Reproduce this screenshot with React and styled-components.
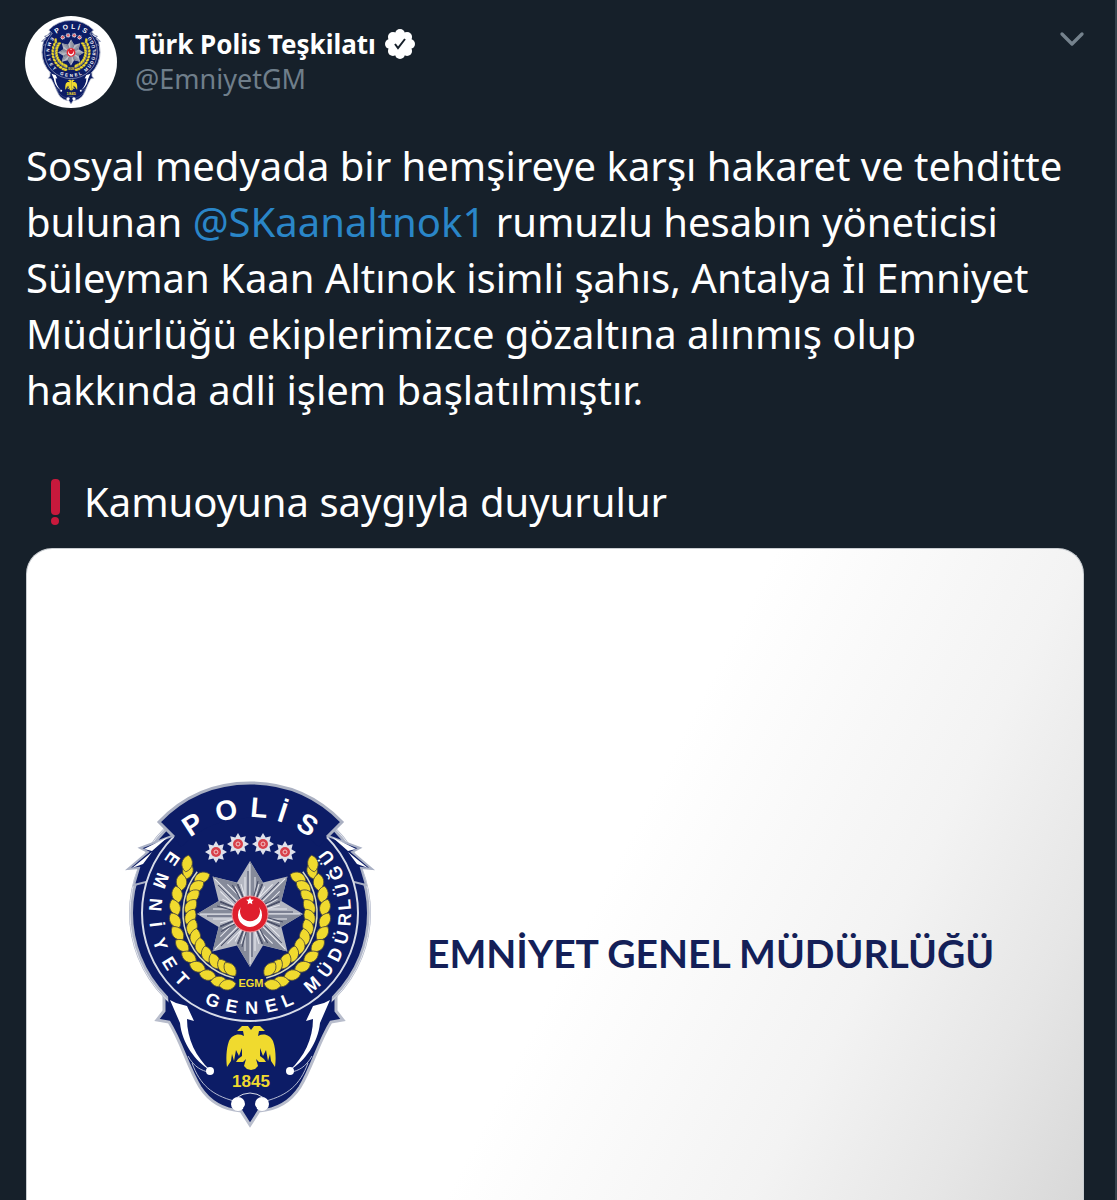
import React from 'react';
import styled, { createGlobalStyle } from 'styled-components';
import { FiChevronDown } from 'react-icons/fi';

const NAVY = '#0c1c66';
const GOLD = '#f0da2e';

// centre of the round part of the badge
const CX = 250;
const CY = 912;

const point = (radius, angle, cx = CX, cy = CY) => {
    const a = (angle * Math.PI) / 180;
    return [cx + radius * Math.sin(a), cy - radius * Math.cos(a)];
}

const starPoints = (cx, cy, outer, inner, tips) => {
    const pts = [];
    for (let i = 0; i < tips * 2; i++) {
        pts.push(point(i % 2 ? inner : outer, (i * 180) / tips, cx, cy).join(','));
    }
    return pts.join(' ');
}

// letter, angle clockwise from the top
const topLetters = [['P', -33], ['O', -13], ['L', 5], ['İ', 18], ['S', 33]];

const ringLetters = [
    ['E', 305], ['M', 290], ['N', 275], ['İ', 263], ['Y', 251], ['E', 238], ['T', 226],
    ['G', 203], ['E', 191], ['N', 179], ['E', 167], ['L', 157],
    ['M', 139], ['Ü', 127], ['D', 116], ['Ü', 105], ['R', 94], ['L', 85], ['Ü', 76], ['Ğ', 65], ['Ü', 54],
];

const leafAngles = [-56, -66, -76, -86, -96, -106, -116, -126, -136, -146, -156, -163];

const LEAF = 'M0 -9 C7 -5 7 4 0 8 C-7 4 -7 -5 0 -9Z';

const Laurel = () => (
    <g fill={GOLD} stroke="#4d4a3c" strokeWidth="0.8">
        {leafAngles.map((angle) => {
            const [ox, oy] = point(75, angle);
            const [ix, iy] = point(60, angle + 2);
            return (
                <g key={angle}>
                    <path d={LEAF} transform={`translate(${ox} ${oy}) rotate(${angle + 66})`} />
                    <path d={LEAF} transform={`translate(${ix} ${iy}) rotate(${angle + 124})`} />
                </g>
            )
        })}
        <path d={LEAF} transform="translate(187 863) rotate(10)" />
        <path d={`M${point(67, -52).join(' ')} A67 67 0 0 0 ${point(67, -166).join(' ')}`} fill="none" stroke="#d9dbc0" strokeWidth="1.5" />
    </g>
)

const Feathers = () => (
    <g>
        <path d="M172 835 L140 847 L148 851 L128 868 L139 867 L134 884 L150 880 L176 840Z" fill={NAVY} stroke="#a9b0c4" strokeWidth="2" />
        <path d="M168 836 L144 848 L152 850Z M152 851 L132 867 L143 863Z" fill="#fff" />
    </g>
)

// left half of the shield, drawn twice
const Half = () => (
    <g>
        <path d="M170 999 L176 1002 L187 1005 L194 1020 L187 1018 C187 1038 196 1056 210 1069 C195 1060 182 1042 180 1022Z" fill="#fff" />
        <path d="M188 1055 C194 1066 202 1070 209 1071 M192 1062 C200 1084 212 1094 234 1100" fill="none" stroke="#b4bbd2" strokeWidth="1" />
        <circle cx="210" cy="1070" r="4" fill="#fff" />
        <circle cx="238" cy="1103" r="7" fill="#fff" />
        <Laurel />
    </g>
)

const EagleHalf = () => (
    <path d="M0 -18 L-3 -22 L-9 -22 L-14 -17 L-8 -17 L-7 -12 C-13 -15 -19 -13 -22 -7 C-25 1 -25 12 -24 19 L-20 13 L-19 6 L-17 13 L-15 2 L-12 8 L-9 0 L-9 8 L-13 11 L-15 14 L-8 14 L-5 11 L-7 18 L-4 21 L0 22Z" />
)

const PoliceBadge = ({ className }) => (
    <svg className={className} viewBox="124 776 252 352" role="img" aria-label="Emniyet Genel Müdürlüğü">
        <path
            d="M164 994 L164 1010 L157 1019 L169 1021 C181 1040 188 1066 200 1086 C211 1103 227 1109 241 1110 L250 1124 L259 1110 C273 1109 289 1103 300 1086 C312 1066 319 1040 331 1021 L343 1019 L336 1010 L336 994Z"
            fill={NAVY}
            stroke="#b8bdcc"
            strokeWidth="3"
        />
        <circle cx={CX} cy={CY} r="119" fill={NAVY} stroke="#aeb4c6" strokeWidth="4" />
        <circle cx={CX} cy={CY} r="120" fill="none" stroke="#e4e7ef" strokeWidth="1" />
        <path d="M168 994 H332 L331 1010 L320 1036 H180 L169 1010Z" fill={NAVY} />
        <Feathers />
        <g transform="translate(500 0) scale(-1 1)"><Feathers /></g>
        <circle cx={CX} cy={CY} r="108" fill={NAVY} stroke="#d8dce8" strokeWidth="2" />
        <Half />
        <g transform="translate(500 0) scale(-1 1)"><Half /></g>
        <path d="M159 821 Q196 782 250 782 Q304 782 342 821 L327 836 L319 846 A96 96 0 0 0 181 846 L174 836Z" fill={NAVY} />
        <path d="M174 836 L159 821 Q196 782 250 782 Q304 782 342 821 L327 836" fill="none" stroke="#aab0c2" strokeWidth="3" />
        <path d="M236 1097 Q250 1087 264 1097" fill="none" stroke="#d8dce8" strokeWidth="1" />
        <path d="M250 1098 L257 1107 L250 1116 L243 1107Z" fill={NAVY} />

        <BadgeText $size={28}>
            {topLetters.map(([letter, angle]) => (
                <text key={angle} x={CX} y={CY - 96} transform={`rotate(${angle} ${CX} ${CY})`}>{letter}</text>
            ))}
        </BadgeText>
        <BadgeText $size={18}>
            {ringLetters.map(([letter, angle]) => (
                <text key={angle} x={CX} y={CY + 101} transform={`rotate(${angle - 180} ${CX} ${CY})`}>{letter}</text>
            ))}
        </BadgeText>

        {[[216, 851], [238, 843], [263, 843], [285, 851]].map(([x, y]) => (
            <g key={x}>
                <polygon points={starPoints(x, y, 11, 7, 8)} fill="#dfe1ea" />
                <circle cx={x} cy={y} r="5" fill="#d8404a" />
                <circle cx={x} cy={y} r="2" fill="none" stroke="#f3c9cc" strokeWidth="1" />
            </g>
        ))}

        <polygon points={starPoints(CX, 913, 53, 34, 8)} fill="#b3b6c1" />
        {Array.from({ length: 8 }, (_, i) => (
            <g key={i} transform={`rotate(${i * 45} ${CX} 913)`}>
                <path d="M250 860 L250 913 L263 882Z" fill="#858a9a" />
                <path d="M250 863 V895 M245 876 V896 M255 876 V896 M241 883 L246 900 M259 883 L254 900" stroke="#e9eaf0" strokeWidth="1" />
                <path d="M248 870 V895 M258 880 L253 898 M262 883 L254 903 M238 883 L246 903" stroke="#454b64" strokeWidth="1" />
            </g>
        ))}
        <circle cx={CX} cy="913" r="18" fill="#df1f2d" stroke="#e8999f" strokeWidth="1" />
        <path d="M241 906 A12 12 0 1 0 259 906 A10 10 0 1 1 241 906Z" fill="#fff" />
        <polygon points={starPoints(CX, 900, 4, 2, 5)} fill="#fff" />

        <BadgeText $size={11} $color={GOLD}><text x="251" y="986">EGM</text></BadgeText>
        <g transform="translate(251 1047)" fill={GOLD}>
            <EagleHalf />
            <g transform="scale(-1 1)"><EagleHalf /></g>
        </g>
        <BadgeText $size={17} $color={GOLD}><text x="251" y="1086">1845</text></BadgeText>
    </svg>
)

const VerifiedIcon = () => (
    <svg width="32" height="32" viewBox="0 0 32 32" role="img" aria-label="Onaylanmış hesap">
        {Array.from({ length: 8 }, (_, i) => {
            const [x, y] = point(10, i * 45, 16, 16);
            return <circle key={i} cx={x} cy={y} r="5" fill="#fff" />
        })}
        <circle cx="16" cy="16" r="11" fill="#fff" />
        <path d="M11 16 L14 20 L21 11" fill="none" stroke="#16202a" strokeWidth="2" />
    </svg>
)

const App = () => {

    return (
        <>
        <GlobalStyle />
        <Tweet>
            <Header>
                <Avatar href="#profile" aria-label="Türk Polis Teşkilatı">
                    <AvatarBadge />
                </Avatar>
                <Names>
                    <Name>Türk Polis Teşkilatı <VerifiedIcon /></Name>
                    <Handle>@EmniyetGM</Handle>
                </Names>
                <MenuButton type="button" aria-label="Diğer">
                    <FiChevronDown size={40} strokeWidth={2} />
                </MenuButton>
            </Header>

            <Body>
                <Message>
                    Sosyal medyada bir hemşireye karşı hakaret ve tehditte<br />
                    bulunan <a href="#mention">@SKaanaltnok1</a> rumuzlu hesabın yöneticisi<br />
                    Süleyman Kaan Altınok isimli şahıs, Antalya İl Emniyet<br />
                    Müdürlüğü ekiplerimizce gözaltına alınmış olup<br />
                    hakkında adli işlem başlatılmıştır.
                </Message>
                <Notice>
                    <svg width="58" height="48" viewBox="0 0 58 48" aria-hidden="true">
                        <rect x="25" y="1" width="9" height="36" rx="4" fill="#c8193c" />
                        <circle cx="29" cy="43" r="4" fill="#c8193c" />
                    </svg>
                    Kamuoyuna saygıyla duyurulur
                </Notice>

                <Photo>
                    <PhotoContent>
                        <LargeBadge />
                        <PhotoTitle>EMNİYET GENEL MÜDÜRLÜĞÜ</PhotoTitle>
                    </PhotoContent>
                </Photo>
            </Body>
        </Tweet>
        </>
    )
}

const GlobalStyle = createGlobalStyle`
  * {
    box-sizing: border-box;
  }
  body {
    margin: 0;
    background: #16202a;
    font-family: "Noto Sans", "Open Sans", sans-serif;
  }
`

const BadgeText = styled.g`
  fill: ${(props) => props.$color || '#fff'};
  font-family: "Liberation Sans", sans-serif;
  font-size: ${(props) => props.$size}px;
  font-weight: 700;
  text-anchor: middle;
`

const Tweet = styled.article`
  display: flex;
  flex-direction: column;
  min-height: 100vh;
  padding-top: 16px;
  border-right: 2px solid #35414c;
  color: #fff;
`

const Header = styled.header`
  display: flex;
  align-items: flex-start;
  padding: 0 23px 0 25px;
`

const Body = styled.div`
  display: flex;
  flex: 1;
  flex-direction: column;
  padding: 30px 31px 0 26px;
`

const Avatar = styled.a`
  display: flex;
  align-items: center;
  justify-content: center;
  width: 92px;
  height: 92px;
  border-radius: 50%;
  background: #fff;
`

const AvatarBadge = styled(PoliceBadge)`
  width: 62px;
  height: 86px;
`

const Names = styled.div`
  flex: 1;
  padding: 10px 0 0 18px;
`

const Name = styled.div`
  display: flex;
  align-items: center;
  gap: 8px;
  font-size: 26px;
  font-weight: 700;
  line-height: 36px;
`

const Handle = styled.div`
  color: #6f7e8a;
  font-size: 27px;
  line-height: 34px;
`

const MenuButton = styled.button`
  display: flex;
  margin-top: 3px;
  padding: 0;
  border: 0;
  background: none;
  color: #75828d;
  cursor: pointer;
`

const Message = styled.p`
  margin: 0 0 56px;
  font-size: 40px;
  line-height: 56px;

  a {
    color: #2a86c8;
    text-decoration: none;
  }
`

const Notice = styled.p`
  display: flex;
  align-items: center;
  margin: 0;
  font-size: 40px;
  line-height: 56px;
`

const Photo = styled.div`
  flex: 1;
  margin-top: 18px;
  padding: 228px 80px 60px 97px;
  border: 1px solid #c9cdd1;
  border-bottom: 0;
  border-radius: 26px 26px 0 0;
  background: linear-gradient(117deg, #fff 54%, #f3f3f3 76%, #e6e6e6 89%, #d8d8d8 100%);
`

const PhotoContent = styled.div`
  display: flex;
  align-items: center;
  gap: 51px;
`

const LargeBadge = styled(PoliceBadge)`
  flex: none;
  width: 252px;
  height: 352px;
`

const PhotoTitle = styled.div`
  color: #141f58;
  font-family: Lato, sans-serif;
  font-size: 39px;
  font-weight: 700;
  white-space: nowrap;
`

export default App;
